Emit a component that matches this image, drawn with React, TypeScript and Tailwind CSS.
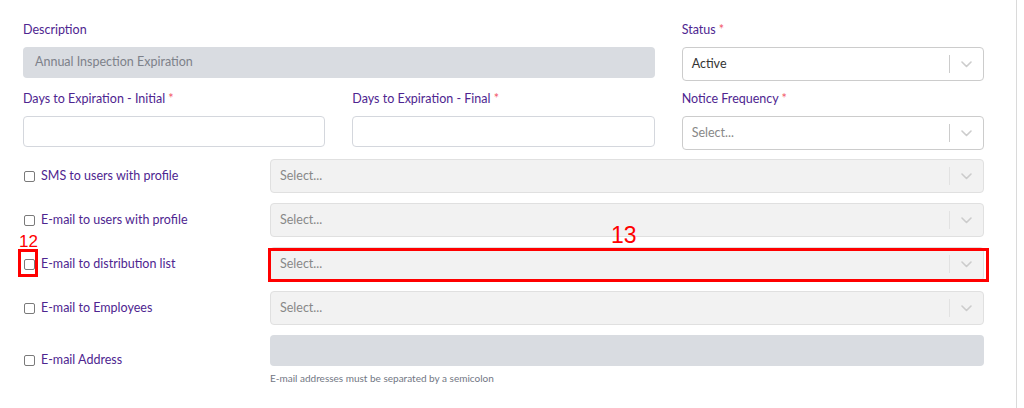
import React from "react";

const Chevron = () => (
  <svg width="11" height="7" viewBox="0 0 11 7" fill="none">
    <polyline points="1,1 5.5,5.5 10,1" stroke="#cccccc" strokeWidth="1.6" strokeLinecap="round" strokeLinejoin="round" />
  </svg>
);

const Label = ({ text, req }: { text: string; req?: boolean }) => (
  <div className="h-[18px] leading-[18px] text-[12.5px] text-[#4e2590] mb-[8px] whitespace-nowrap">
    {text}
    {req && <span className="text-[#f25767]"> *</span>}
  </div>
);

const Select = ({ value, disabled, placeholder }: { value: string; disabled?: boolean; placeholder?: boolean }) => (
  <div
    className={
      disabled
        ? "h-[34px] rounded-[4px] border border-[#e0e0e0] bg-[#f2f2f2] flex items-center"
        : "h-[34px] rounded-[4px] border border-[#cccccc] bg-white flex items-center"
    }
  >
    <span
      className={
        placeholder
          ? "flex-1 pl-[9px] text-[12.5px] text-[#888888] truncate"
          : "flex-1 pl-[9px] text-[12.5px] text-[#333333] truncate"
      }
    >
      {value}
    </span>
    <span className={disabled ? "w-px h-[18px] bg-[#e2e2e2]" : "w-px h-[18px] bg-[#cccccc]"} />
    <span className="w-[33px] flex items-center justify-center">
      <Chevron />
    </span>
  </div>
);

const TextInput = () => <div className="h-[31px] rounded-[4px] border border-[#d4d7dd] bg-white" />;

const Check = () => <span className="w-[11px] h-[11px] border border-[#7a7a7a] rounded-[2px] bg-white shrink-0" />;

const CheckRow = ({ label, children }: { label: string; children: React.ReactNode }) => (
  <div className="flex items-center">
    <div className="w-[247px] flex items-center gap-[6px] pl-[1px]">
      <Check />
      <span className="text-[12.5px] text-[#4e2590] whitespace-nowrap">{label}</span>
    </div>
    <div className="flex-1">{children}</div>
  </div>
);

export default function App() {
  return (
    <div className="relative w-[1017px] h-[408px] bg-white border-r border-[#dadada] font-['Lato',sans-serif] overflow-hidden">
      <div className="w-[984px] pl-[23px] pt-[21px]">
        <div className="grid grid-cols-3 gap-x-[27px] gap-y-[9px] items-start">
          <div className="col-span-2">
            <Label text="Description" />
            <div className="h-[31px] rounded-[4px] bg-[#d9dce1] flex items-center pl-[12px] text-[12.5px] text-[#7d818a]">
              Annual Inspection Expiration
            </div>
          </div>
          <div>
            <Label text="Status" req />
            <Select value="Active" />
          </div>
          <div>
            <Label text="Days to Expiration - Initial" req />
            <TextInput />
          </div>
          <div>
            <Label text="Days to Expiration - Final" req />
            <TextInput />
          </div>
          <div>
            <Label text="Notice Frequency" req />
            <Select value="Select..." placeholder />
          </div>
        </div>

        <div className="mt-[9px] flex flex-col gap-[10px]">
          <CheckRow label="SMS to users with profile">
            <Select value="Select..." placeholder disabled />
          </CheckRow>
          <CheckRow label="E-mail to users with profile">
            <Select value="Select..." placeholder disabled />
          </CheckRow>
          <CheckRow label="E-mail to distribution list">
            <Select value="Select..." placeholder disabled />
          </CheckRow>
          <CheckRow label="E-mail to Employees">
            <Select value="Select..." placeholder disabled />
          </CheckRow>
          <CheckRow label="E-mail Address">
            <div className="h-[31px] rounded-[4px] bg-[#d9dce1]" />
            <div className="mt-[5px] text-[10px] leading-[14px] text-[#727784]">
              E-mail addresses must be separated by a semicolon
            </div>
          </CheckRow>
        </div>
      </div>

      <div className="absolute left-[19px] top-[233px] text-[17px] leading-none text-[#ff0000] font-['Liberation_Sans',sans-serif]">12</div>
      <div className="absolute left-[18px] top-[249px] w-[20px] h-[28px] border-[3px] border-[#ff0000]" />
      <div className="absolute left-[611px] top-[224px] text-[23px] leading-none text-[#ff0000] font-['Liberation_Sans',sans-serif]">13</div>
      <div className="absolute left-[268px] top-[248px] w-[721px] h-[34px] border-[3px] border-[#ff0000]" />
    </div>
  );
}
